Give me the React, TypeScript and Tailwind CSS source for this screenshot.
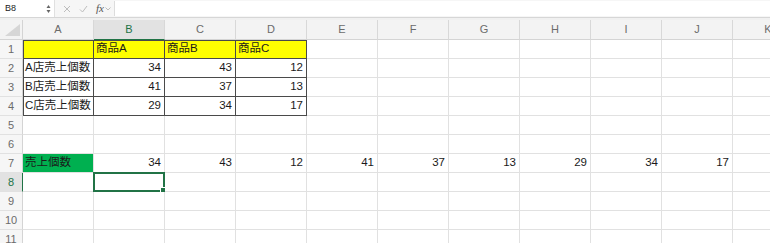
import React from 'react';

const cols = ['A', 'B', 'C', 'D', 'E', 'F', 'G', 'H', 'I', 'J', 'K'];

type Cell = string | number | null;

const rows: Cell[][] = [
  ['', '商品A', '商品B', '商品C'],
  ['A店売上個数', 34, 43, 12],
  ['B店売上個数', 41, 37, 13],
  ['C店売上個数', 29, 34, 17],
  [],
  [],
  ['売上個数', 34, 43, 12, 41, 37, 13, 29, 34, 17],
  [],
  [],
  [],
  [],
];

const font = "font-['Liberation_Sans','Noto_Sans_CJK_JP',sans-serif]";

export default function App() {
  return (
    <div className={`w-[770px] h-[243px] overflow-hidden bg-white ${font}`}>
      {/* Formula bar */}
      <div className="h-[18px] flex items-stretch bg-[#f6f6f6] border-b border-[#d6d6d6]">
        <div className="w-[55px] bg-white flex items-center justify-between pl-[5px] pr-[3px] border-r border-[#e0e0e0]">
          <span className="text-[9px] text-[#222]">B8</span>
          <svg width="5" height="10" viewBox="0 0 5 10">
            <path d="M0.5 4 L2.5 1 L4.5 4 Z" fill="#666" />
            <path d="M0.5 6 L2.5 9 L4.5 6 Z" fill="#666" />
          </svg>
        </div>
        <div className="flex items-center gap-[8px] pl-[8px] pr-[3px]">
          <svg width="8" height="8" viewBox="0 0 8 8">
            <path d="M1 1 L7 7 M7 1 L1 7" stroke="#bdbdbd" strokeWidth="1" />
          </svg>
          <svg width="9" height="8" viewBox="0 0 9 8">
            <path d="M1 4.5 L3.5 7 L8 1" stroke="#bdbdbd" strokeWidth="1" fill="none" />
          </svg>
          <div className="flex items-center gap-[1px]">
            <span className="font-['Liberation_Serif',serif] italic text-[11px] text-[#555] leading-none">fx</span>
            <svg width="6" height="4" viewBox="0 0 6 4">
              <path d="M0.5 0.5 L3 3 L5.5 0.5" stroke="#bdbdbd" strokeWidth="1" fill="none" />
            </svg>
          </div>
        </div>
        <div className="flex-1 bg-white border-l border-[#dcdcdc] my-[1px]" />
      </div>
      <div className="h-[2px] bg-[#f0f0f0]" />

      {/* Grid */}
      <div className="grid grid-cols-[23px_repeat(11,71px)] text-[11.5px]">
        {/* Header row */}
        <div className="h-[20px] bg-[#f3f3f3] border-r border-b border-[#d4d4d4] flex items-end justify-end">
          <svg width="16" height="13" viewBox="0 0 16 13" className="mb-[2px] mr-[1px]">
            <path d="M15 0 L15 12 L0 12 Z" fill="#d6d6d6" />
          </svg>
        </div>
        {cols.map(c => (
          <div
            key={c}
            className={`h-[20px] flex items-center justify-center text-[11px] border-r border-[#d8d8d8] ${
              c === 'B'
                ? 'bg-[#e2e2e2] text-[#217346] border-b border-b-[#217346]'
                : 'bg-[#f3f3f3] text-[#6b6b6b] border-b border-b-[#d4d4d4]'
            }`}
          >
            {c}
          </div>
        ))}

        {rows.map((row, ri) => {
          const r = ri + 1;
          return (
            <React.Fragment key={r}>
              <div
                className={`h-[19px] flex items-center justify-center text-[11px] border-b border-[#e1e1e1] ${
                  r === 8
                    ? 'bg-[#e2e2e2] text-[#217346] border-r border-r-[#217346]'
                    : 'bg-[#f6f6f6] text-[#6b6b6b] border-r border-r-[#d4d4d4]'
                }`}
              >
                {r}
              </div>
              {cols.map((c, ci) => {
                const v = row[ci];
                const inTable = r <= 4 && ci <= 3;
                const yellow = r === 1 && ci <= 3;
                const green = r === 7 && ci === 0;
                const selected = r === 8 && c === 'B';
                const isNum = typeof v === 'number';
                let cls = 'h-[19px] relative flex items-center whitespace-nowrap overflow-visible text-[#1a1a1a] ';
                cls += isNum ? 'justify-end pr-[3px] ' : 'pl-[2px] ';
                if (inTable) {
                  cls += 'border-r border-b border-[#4a4a4a] ';
                  if (ci === 0) cls += 'shadow-[inset_1px_0_0_#4a4a4a] ';
                  if (r === 1) cls += 'shadow-[inset_0_1px_0_#4a4a4a] ';
                  if (r === 1 && ci === 0) cls += '!shadow-[inset_1px_1px_0_#4a4a4a] ';
                } else {
                  cls += 'border-r border-b border-[#e1e1e1] ';
                }
                if (yellow) cls += 'bg-[#ffff00] ';
                else if (green) cls += 'bg-[#00b050] ';
                else cls += 'bg-white ';
                return (
                  <div key={c} className={cls}>
                    {v !== undefined && v !== null && v !== '' ? v : null}
                    {selected && (
                      <div className="absolute -left-px -top-px right-[-1px] bottom-[-1px] border-2 border-[#217346]">
                        <div className="absolute right-[-3px] bottom-[-3px] w-[4px] h-[4px] bg-[#217346] border border-white box-content" />
                      </div>
                    )}
                  </div>
                );
              })}
            </React.Fragment>
          );
        })}
      </div>
    </div>
  );
}
